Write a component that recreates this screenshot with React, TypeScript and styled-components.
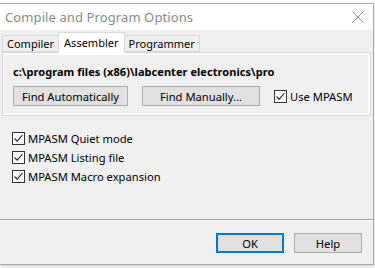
import React from "react";
import styled, { createGlobalStyle } from "styled-components";

const Global = createGlobalStyle`
  html, body { margin: 0; padding: 0; background: #ffffff; }
  body { font-family: "Noto Sans", "Open Sans", sans-serif; }
  * { box-sizing: border-box; }
`;

const Page = styled.div`
  width: 375px;
  height: 268px;
  padding-top: 3px;
  overflow: hidden;
`;

const Window = styled.div`
  width: 374px;
  height: 262px;
  border: 1px solid #a9a9a9;
  border-left: none;
  background: #f0f0f0;
  display: flex;
  flex-direction: column;
  box-shadow: 0 2px 4px rgba(0, 0, 0, 0.18);
`;

const TitleBar = styled.div`
  height: 26px;
  background: #ffffff;
  display: flex;
  align-items: center;
  justify-content: space-between;
  padding: 0 9px 0 5px;
`;

const Title = styled.span`
  font-size: 13px;
  color: #8a8a8a;
  letter-spacing: 0.1px;
`;

const Body = styled.div`
  flex: 1;
  display: flex;
  flex-direction: column;
  padding-top: 2px;
`;

const TabRow = styled.div`
  display: flex;
  align-items: flex-end;
  padding-left: 2px;
  height: 20px;
  position: relative;
  z-index: 1;
`;

const Tab = styled.div<{ $active?: boolean }>`
  font-size: 11px;
  color: #000;
  display: flex;
  align-items: center;
  justify-content: center;
  border: 1px solid #d9d9d9;
  background: ${(p) => (p.$active ? "#ffffff" : "#f0f0f0")};
  height: ${(p) => (p.$active ? "21px" : "17px")};
  padding: ${(p) => (p.$active ? "0 5px 2px" : "0 4px")};
  margin: ${(p) => (p.$active ? "0 -1px -1px" : "0")};
  border-bottom: ${(p) => (p.$active ? "none" : "1px solid #d9d9d9")};
  position: relative;
  z-index: ${(p) => (p.$active ? 2 : 1)};
`;

const Frame = styled.div`
  margin-left: 2px;
  width: 369px;
  height: 64px;
  border: 1px solid #d9d9d9;
  background: #ffffff;
  padding: 2px 2px 2px 1px;
  display: flex;
`;

const Pane = styled.div`
  flex: 1;
  background: #f0f0f0;
  display: flex;
  flex-direction: column;
  padding: 9px 0 0 9px;
`;

const PathText = styled.div`
  font-size: 11px;
  font-weight: 700;
  color: #000;
  height: 16px;
  line-height: 16px;
  letter-spacing: 0.05px;
`;

const ButtonRow = styled.div`
  display: flex;
  align-items: center;
  margin-top: 6px;
  gap: 14px;
`;

const Button = styled.div<{ $w: number; $default?: boolean }>`
  width: ${(p) => p.$w}px;
  height: 20px;
  background: #e1e1e1;
  border: ${(p) => (p.$default ? "2px solid #0078d7" : "1px solid #adadad")};
  font-size: 11.2px;
  color: #000;
  display: flex;
  align-items: center;
  justify-content: center;
`;

const CheckRow = styled.label`
  display: flex;
  align-items: center;
  gap: 3px;
  height: 19px;
  font-size: 11.2px;
  color: #000;
`;

const Box = styled.span`
  width: 13px;
  height: 13px;
  border: 1px solid #333333;
  background: #ffffff;
  display: flex;
  align-items: center;
  justify-content: center;
`;

const Options = styled.div`
  flex: 1;
  display: flex;
  flex-direction: column;
  padding: 13px 0 0 12px;
`;

const Footer = styled.div`
  height: 45px;
  border-top: 1px solid #a0a0a0;
  box-shadow: inset 0 1px 0 #ffffff;
  display: flex;
  justify-content: flex-end;
  align-items: flex-start;
  gap: 10px;
  padding: 13px 11px 0 0;
`;

const Check = ({ children }: { children: React.ReactNode }) => (
  <CheckRow>
    <Box>
      <svg width="11" height="11" viewBox="0 0 11 11">
        <path d="M1.5 5.5 L4.2 8.2 L9.5 2" fill="none" stroke="#222" strokeWidth="1.1" />
      </svg>
    </Box>
    {children}
  </CheckRow>
);

export default function App() {
  return (
    <>
      <Global />
      <Page>
        <Window>
          <TitleBar>
            <Title>Compile and Program Options</Title>
            <svg width="12" height="12" viewBox="0 0 12 12">
              <path d="M0.5 0.5 L11.5 11.5 M11.5 0.5 L0.5 11.5" stroke="#8f8f8f" strokeWidth="1" />
            </svg>
          </TitleBar>
          <Body>
            <TabRow>
              <Tab>Compiler</Tab>
              <Tab $active>Assembler</Tab>
              <Tab>Programmer</Tab>
            </TabRow>
            <Frame>
              <Pane>
                <PathText>c:\program files (x86)\labcenter electronics\pro</PathText>
                <ButtonRow>
                  <Button $w={115}>Find Automatically</Button>
                  <Button $w={118}>Find Manually...</Button>
                  <Check>Use MPASM</Check>
                </ButtonRow>
              </Pane>
            </Frame>
            <Options>
              <Check>MPASM Quiet mode</Check>
              <Check>MPASM Listing file</Check>
              <Check>MPASM Macro expansion</Check>
            </Options>
            <Footer>
              <Button $w={68} $default>OK</Button>
              <Button $w={68}>Help</Button>
            </Footer>
          </Body>
        </Window>
      </Page>
    </>
  );
}
